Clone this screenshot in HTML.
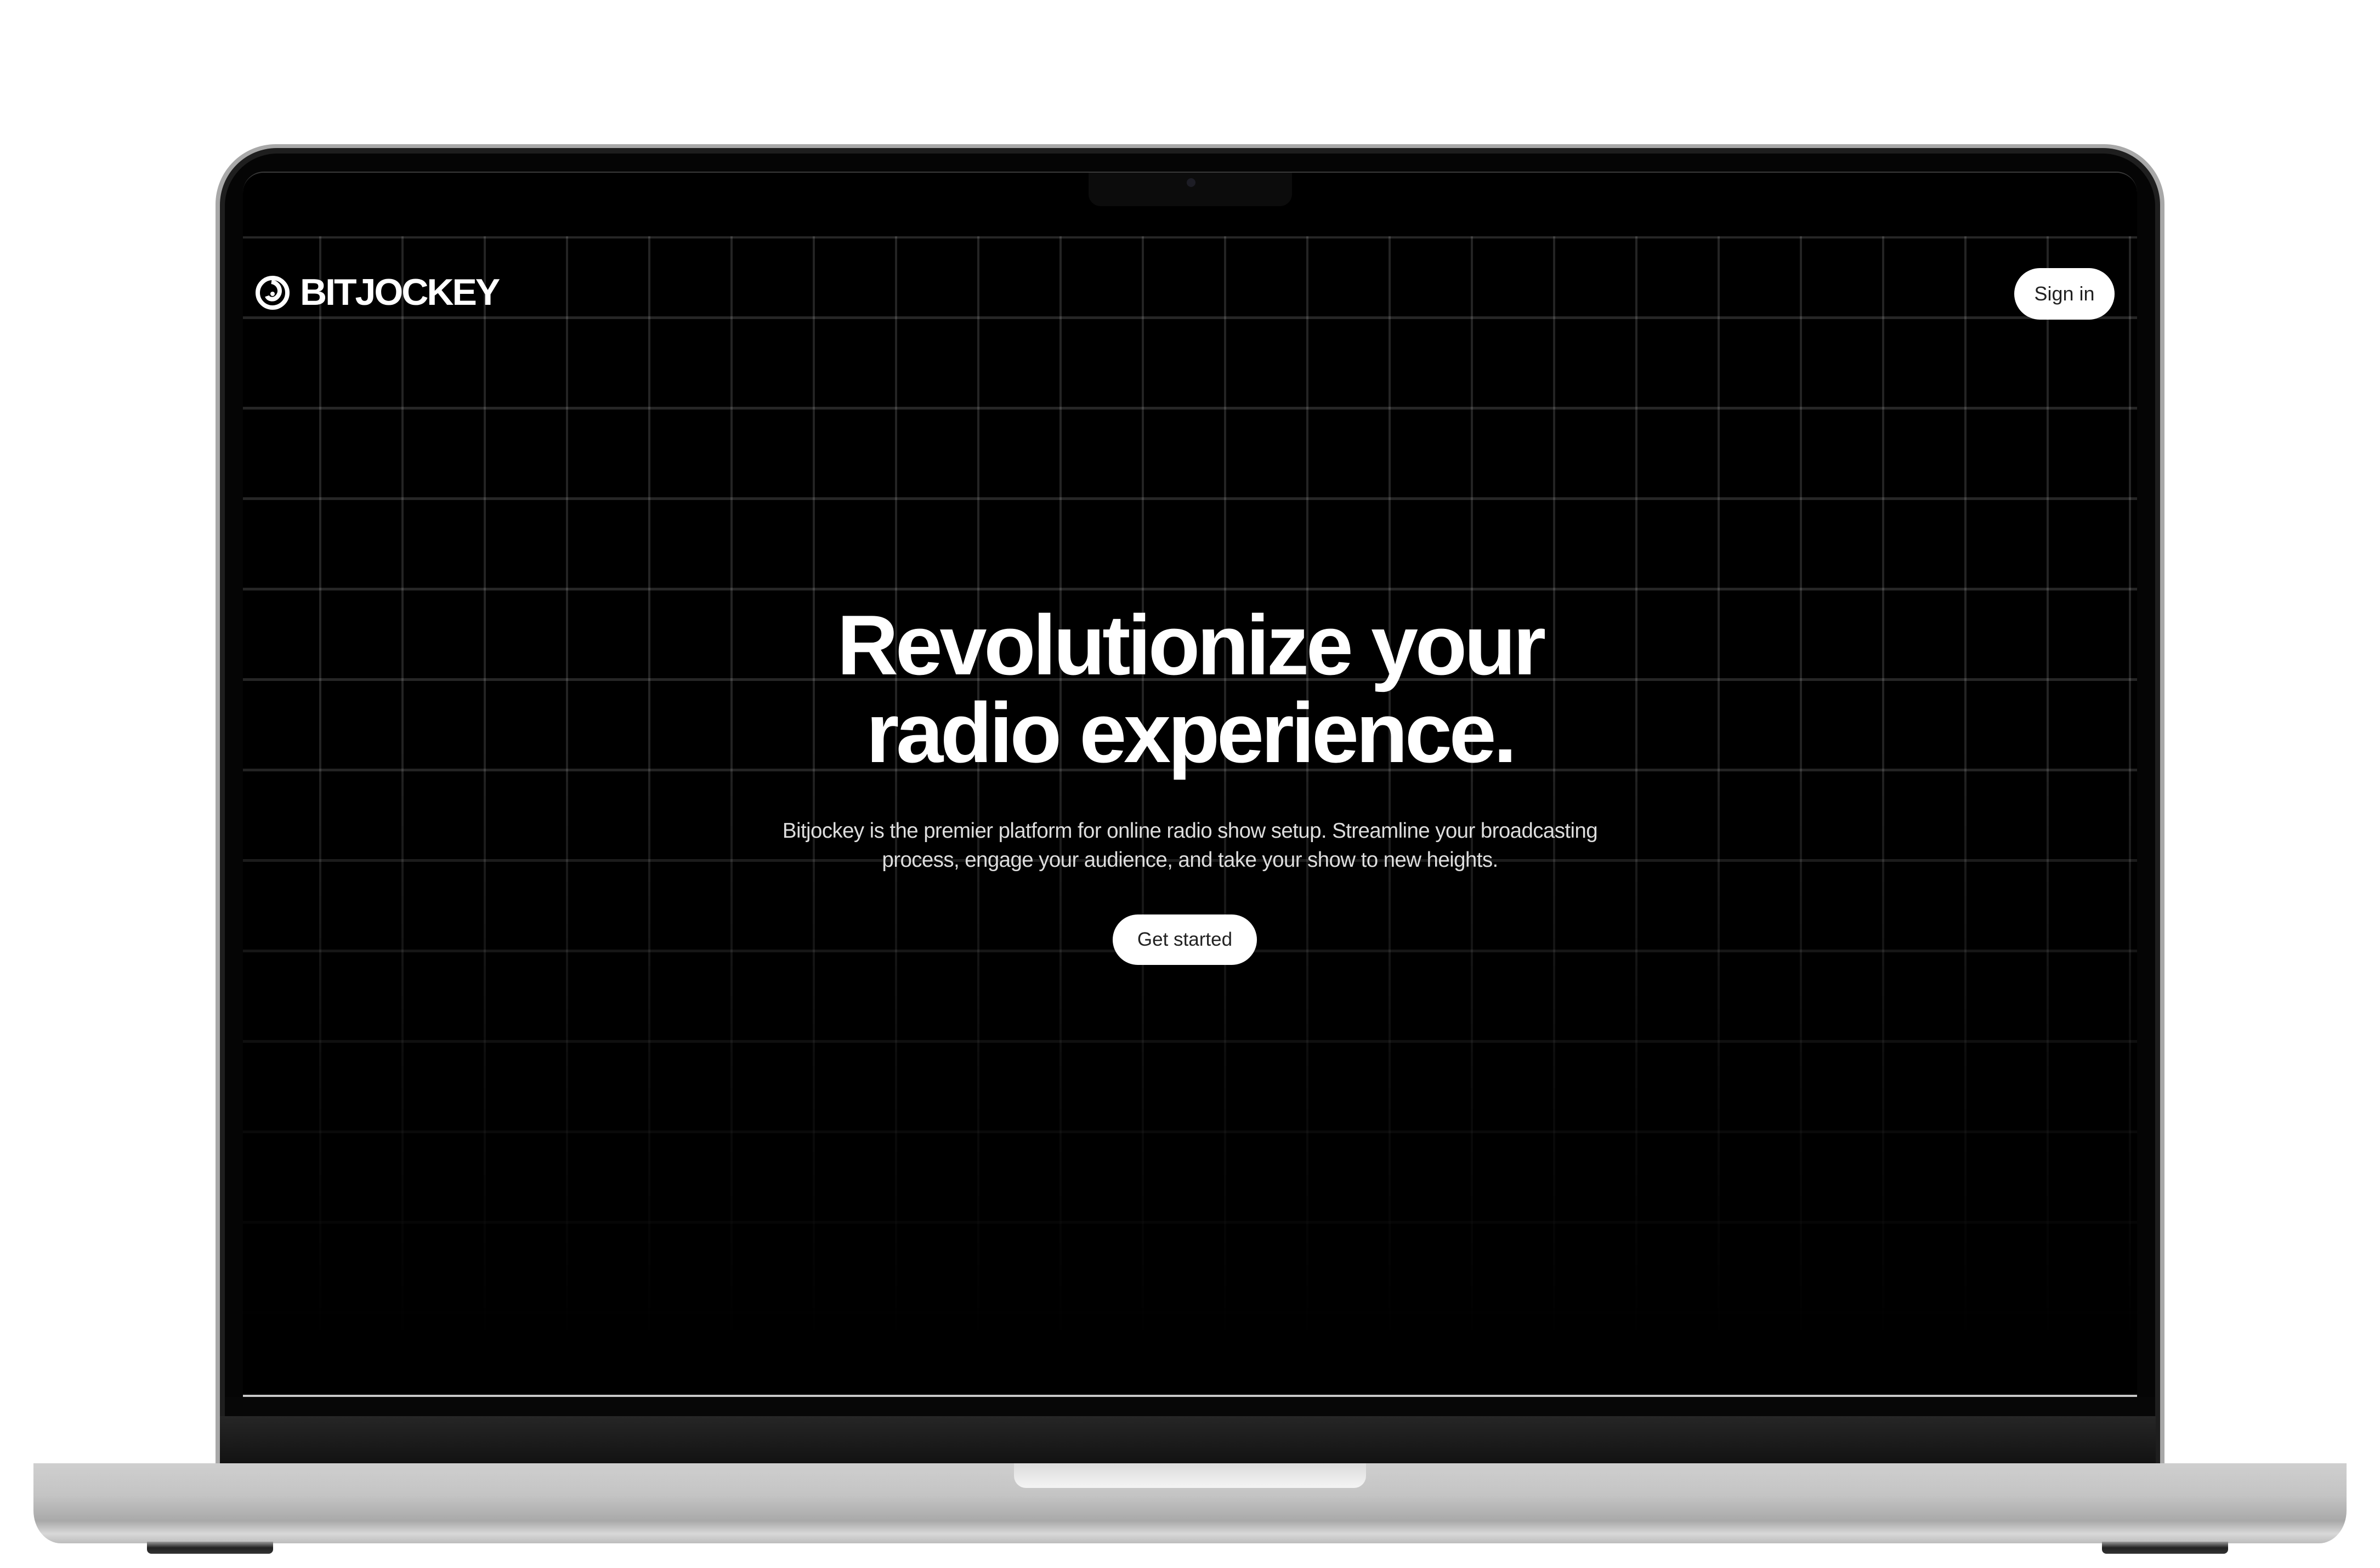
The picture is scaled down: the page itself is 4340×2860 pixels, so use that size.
<!DOCTYPE html>
<html><head><meta charset="utf-8"><style>
html,body{margin:0;padding:0;background:#fff;}
body{width:4340px;height:2860px;position:relative;overflow:hidden;font-family:"Liberation Sans",sans-serif;}
.abs{position:absolute;}
.lid{left:393px;top:263px;width:3554px;height:2420px;border-radius:110px 110px 0 0;background:#a8a8a8;}
.lid2{left:401px;top:270px;width:3538px;height:2413px;border-radius:104px 104px 0 0;background:#1e1e1e;}
.lid3{left:410px;top:280px;width:3520px;height:2403px;border-radius:96px 96px 0 0;background:#050505;}
.screen{left:443px;top:313px;width:3454px;height:2233px;background:#000;border-radius:38px 38px 0 0;border-top:2px solid #3a3a3a;overflow:hidden;}
.grid{left:0;top:116px;width:3454px;height:2010px;
background-image:linear-gradient(to right,rgba(255,255,255,0.14) 0,rgba(255,255,255,0.14) 4px,transparent 4px),linear-gradient(to bottom,rgba(255,255,255,0.15) 0,rgba(255,255,255,0.15) 5px,transparent 5px);
background-size:150px 165px,150px 165px;background-position:139px 0,0 142px;
-webkit-mask-image:linear-gradient(to bottom,#000 0%,#000 45%,rgba(0,0,0,0.35) 75%,transparent 100%);
mask-image:linear-gradient(to bottom,#000 0%,#000 45%,rgba(0,0,0,0.35) 75%,transparent 100%);border-top:4px solid rgba(255,255,255,0.15);}
.notch{left:1542px;top:0;width:371px;height:61px;background:#0c0c0c;border-radius:0 0 22px 22px;}
.cam{left:179px;top:10px;width:16px;height:16px;border-radius:50%;background:#1d1d25;}
.logo{left:22px;top:178px;color:#fff;font-weight:bold;font-size:68px;letter-spacing:-3px;line-height:80px;}
.signin{left:3230px;top:174px;width:183px;height:94px;border-radius:47px;background:#fff;color:#222;font-size:36px;line-height:94px;text-align:center;}
h1{position:absolute;left:0;width:3454px;top:782px;margin:0;text-align:center;color:#fff;font-size:155px;line-height:160px;letter-spacing:-5.5px;font-weight:bold;}
.p{left:0;width:3454px;top:1174px;text-align:center;color:#ddd;font-size:38.5px;line-height:53px;letter-spacing:-0.6px;}
.gs{left:1586px;top:1353px;width:263px;height:92px;border-radius:46px;background:#fff;color:#222;font-size:35px;line-height:92px;text-align:center;}
.wline{left:443px;top:2544px;width:3454px;height:4px;background:#c8c8c8;}
.chin{left:410px;top:2548px;width:3520px;height:36px;background:#070707;}
.hinge{left:401px;top:2583px;width:3530px;height:88px;background:linear-gradient(#262626,#121212);}
.base{left:61px;top:2669px;width:4218px;height:146px;border-radius:0 0 50px 50px/0 0 60px 60px;background:linear-gradient(#cfcfcf 0%,#c4c4c4 40%,#a9a9a9 72%,#d8d8d8 88%,#bdbdbd 100%);}
.bnotch{left:1849px;top:2669px;width:642px;height:45px;border-radius:0 0 22px 22px;background:linear-gradient(#dcdcdc,#f4f4f4);}
.foot{top:2812px;width:230px;height:22px;border-radius:0 0 8px 8px;background:linear-gradient(#9a9a9a,#222 50%,#333);}
</style></head><body>
<div class="abs lid"></div><div class="abs lid2"></div><div class="abs lid3"></div>
<div class="abs screen">
 <div class="abs grid"></div>
 <div class="abs notch"><div class="abs cam"></div></div>
 <div class="abs logo"><svg width="64" height="64" viewBox="0 0 64 64" style="vertical-align:-10px;margin-right:18px"><circle cx="32" cy="32" r="27" fill="none" stroke="#fff" stroke-width="8"/><path d="M30 12 C44 14 50 30 40 40 C34 46 24 44 22 38" fill="none" stroke="#fff" stroke-width="8"/><circle cx="32" cy="34" r="4" fill="#fff"/></svg>BITJOCKEY</div>
 <div class="abs signin">Sign in</div>
 <h1>Revolutionize your<br>radio experience.</h1>
 <div class="abs p">Bitjockey is the premier platform for online radio show setup. Streamline your broadcasting<br>process, engage your audience, and take your show to new heights.</div>
 <div class="abs gs">Get started</div>
</div>
<div class="abs wline"></div>
<div class="abs chin"></div>
<div class="abs hinge"></div>
<div class="abs base"></div>
<div class="abs bnotch"></div>
<div class="abs foot" style="left:268px"></div>
<div class="abs foot" style="left:3833px"></div>
</body></html>
